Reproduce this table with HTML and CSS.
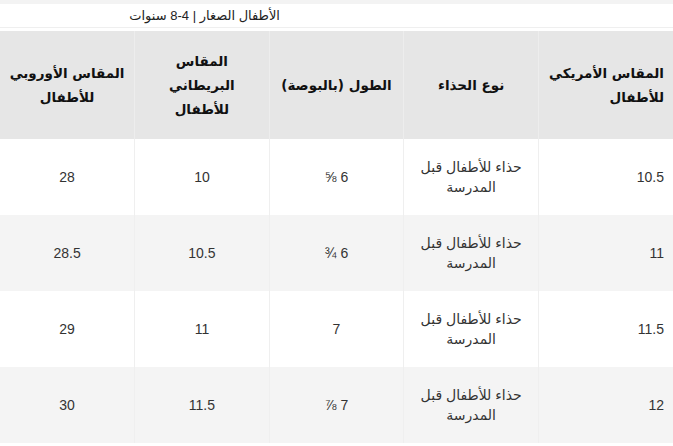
FILE: index.html
```html
<!DOCTYPE html>
<html lang="ar" dir="rtl">
<head>
<meta charset="utf-8">
<title>جدول المقاسات</title>
<link rel="stylesheet" href="styles.css">
</head>
<body>
<div class="top-strip"></div>
<div class="caption-row">
  <span class="caption">الأطفال الصغار | 4-8 سنوات</span>
</div>
<table class="size-table">
  <thead>
    <tr>
      <th class="first">المقاس الأمريكي للأطفال</th>
      <th>نوع الحذاء</th>
      <th>الطول (بالبوصة)</th>
      <th>المقاس البريطاني للأطفال</th>
      <th>المقاس الأوروبي للأطفال</th>
    </tr>
  </thead>
  <tbody>
    <tr>
      <td class="first">10.5</td>
      <td>حذاء للأطفال قبل المدرسة</td>
      <td>6 ⅝</td>
      <td>10</td>
      <td>28</td>
    </tr>
    <tr class="alt">
      <td class="first">11</td>
      <td>حذاء للأطفال قبل المدرسة</td>
      <td>6 ¾</td>
      <td>10.5</td>
      <td>28.5</td>
    </tr>
    <tr>
      <td class="first">11.5</td>
      <td>حذاء للأطفال قبل المدرسة</td>
      <td>7</td>
      <td>11</td>
      <td>29</td>
    </tr>
    <tr class="alt">
      <td class="first">12</td>
      <td>حذاء للأطفال قبل المدرسة</td>
      <td>7 ⅞</td>
      <td>11.5</td>
      <td>30</td>
    </tr>
  </tbody>
</table>
</body>
</html>
```
FILE: styles.css
```css
html, body {
  margin: 0;
  padding: 0;
  background: #ffffff;
}
body {
  font-family: "Liberation Sans", "DejaVu Sans", sans-serif;
  color: #333333;
  width: 673px;
  overflow: hidden;
}
.top-strip {
  height: 4px;
  background: #f3f3f3;
}
.caption-row {
  height: 23px;
  border-bottom: 1px solid #efefef;
  margin-bottom: 3px;
  display: flex;
  align-items: center;
  padding-right: 393px;
}
.caption {
  font-size: 13px;
  color: #222222;
  line-height: 18px;
}
.size-table {
  width: 673px;
  table-layout: fixed;
  border-collapse: collapse;
}
.size-table th {
  background: #e6e6e6;
  color: #111111;
  font-family: "DejaVu Sans", sans-serif;
  font-weight: bold;
  font-size: 13.5px;
  line-height: 24px;
  padding: 18px 6px;
  height: 72px;
  text-align: center;
  border-left: 1px solid #ededed;
  vertical-align: middle;
}
.size-table td {
  font-size: 14px;
  line-height: 20px;
  padding: 18px 6px;
  height: 40px;
  text-align: center;
  vertical-align: middle;
  border-left: 1px solid #efefef;
  color: #333333;
}
.size-table th.first,
.size-table td.first {
  text-align: right;
  padding-right: 9px;
  padding-left: 2px;
}
.size-table th:last-child,
.size-table td:last-child {
  border-left: none;
}
.size-table tr.alt td {
  background: #f4f4f4;
}
```
